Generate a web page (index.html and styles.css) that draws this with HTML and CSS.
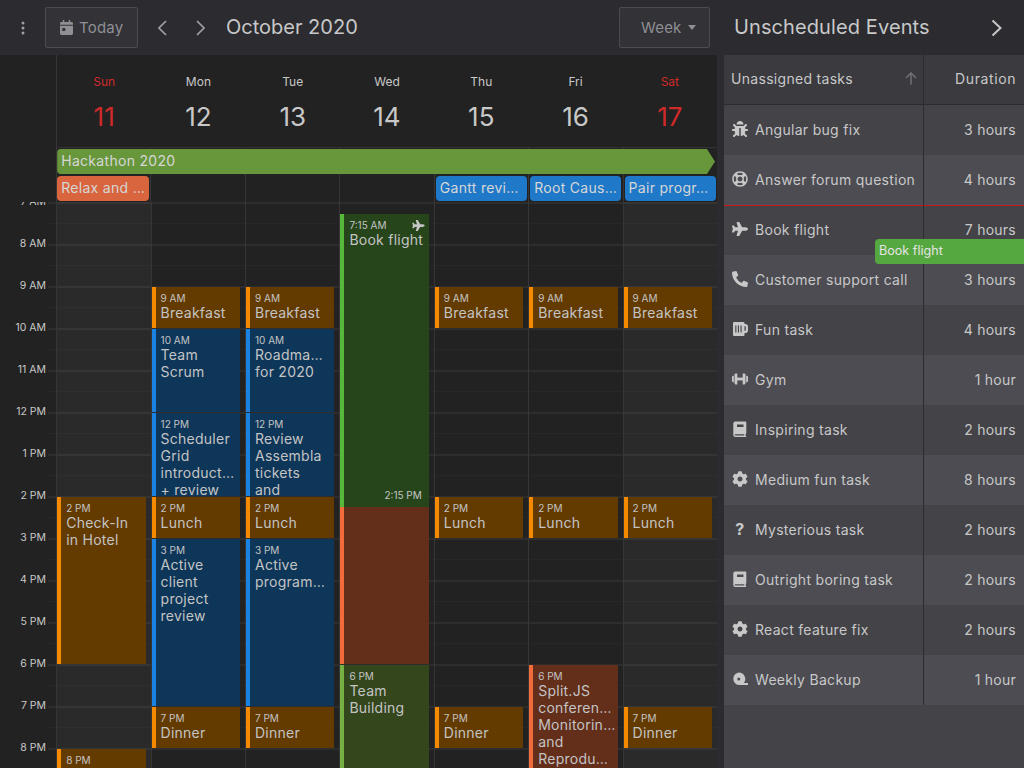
FILE: index.html
```html
<!DOCTYPE html>
<html lang="en">
<head>
    <meta charset="UTF-8">
    <title>Scheduler - October 2020</title>
    <link rel="stylesheet" href="styles.css">
</head>
<body>
    <svg class="sprite" aria-hidden="true">
        <symbol id="i-plane" viewBox="0 0 576 512"><path d="M480 192H365.71L260.61 8.06A16.014 16.014 0 0 0 246.71 0h-65.5c-10.63 0-18.3 10.17-15.38 20.39L214.86 192H112l-43.2-57.6c-3.02-4.03-7.77-6.4-12.8-6.4H16.01C5.6 128-2.04 137.78.49 147.88L32 256 .49 364.12C-2.04 374.22 5.6 384 16.01 384H56c5.04 0 9.78-2.37 12.8-6.4L112 320h102.86l-49.03 171.6c-2.92 10.22 4.75 20.4 15.38 20.4h65.5c5.74 0 11.04-3.08 13.89-8.06L365.71 320H480c35.35 0 96-28.65 96-64s-60.65-64-96-64z"/></symbol>
        <symbol id="i-phone" viewBox="0 0 512 512"><path d="M497.39 361.8l-112-48a24 24 0 0 0-28 6.9l-49.6 60.6A370.66 370.66 0 0 1 130.6 204.11l60.6-49.6a23.94 23.94 0 0 0 6.9-28l-48-112A24.16 24.16 0 0 0 122.6.61l-104 24A24 24 0 0 0 0 48c0 256.5 207.9 464 464 464a24 24 0 0 0 23.4-18.6l24-104a24.29 24.29 0 0 0-14.01-27.6z"/></symbol>
        <symbol id="i-cog" viewBox="0 0 512 512"><path d="M487.4 315.7l-42.6-24.6c4.3-23.2 4.3-47 0-70.2l42.6-24.6c4.9-2.8 7.1-8.6 5.5-14-11.1-35.6-30-67.8-54.7-94.6-3.8-4.1-10-5.1-14.8-2.3L380.8 110c-17.9-15.4-38.5-27.3-60.8-35.1V25.8c0-5.6-3.9-10.5-9.4-11.7-36.7-8.2-74.3-7.8-109.2 0-5.5 1.2-9.4 6.1-9.4 11.7V75c-22.2 7.9-42.8 19.8-60.8 35.1L88.7 85.5c-4.9-2.8-11-1.9-14.8 2.3-24.7 26.7-43.6 58.9-54.7 94.6-1.7 5.4.6 11.2 5.5 14L67.3 221c-4.3 23.2-4.3 47 0 70.2l-42.6 24.6c-4.9 2.8-7.1 8.6-5.5 14 11.1 35.6 30 67.8 54.7 94.6 3.8 4.1 10 5.1 14.8 2.3l42.6-24.6c17.9 15.4 38.5 27.3 60.8 35.1v49.2c0 5.6 3.9 10.5 9.4 11.7 36.7 8.2 74.3 7.8 109.2 0 5.5-1.2 9.4-6.1 9.4-11.7v-49.2c22.2-7.9 42.8-19.8 60.8-35.1l42.6 24.6c4.9 2.8 11 1.9 14.8-2.3 24.7-26.7 43.6-58.9 54.7-94.6 1.5-5.5-.7-11.3-5.6-14.1zM256 336c-44.1 0-80-35.9-80-80s35.9-80 80-80 80 35.9 80 80-35.9 80-80 80z"/></symbol>
        <symbol id="i-bug" viewBox="0 0 512 512"><path d="M511.988 288.9c-.478 17.43-15.217 31.1-32.653 31.1H424v16c0 21.864-4.882 42.584-13.6 61.145l60.228 60.228c12.496 12.497 12.496 32.758 0 45.255-12.498 12.497-32.759 12.496-45.256 0l-54.736-54.736C345.886 467.965 314.351 480 280 480V236c0-6.627-5.373-12-12-12h-24c-6.627 0-12 5.373-12 12v244c-34.351 0-65.886-12.035-90.636-32.108l-54.736 54.736c-12.498 12.497-32.759 12.496-45.256 0-12.496-12.497-12.496-32.758 0-45.255l60.228-60.228C92.882 378.584 88 357.864 88 336v-16H32.666C15.23 320 .491 306.33.013 288.9-.484 270.816 14.028 256 32 256h56v-58.745l-46.628-46.628c-12.496-12.497-12.496-32.758 0-45.255 12.498-12.497 32.758-12.497 45.256 0L141.255 160h229.489l54.627-54.627c12.498-12.497 32.758-12.497 45.256 0 12.496 12.497 12.496 32.758 0 45.255L424 197.255V256h56c17.972 0 32.484 14.816 31.988 32.9zM257 0c-61.856 0-112 50.144-112 112h224C369 50.144 318.856 0 257 0z"/></symbol>
        <symbol id="i-ring" viewBox="0 0 512 512"><path d="M256 504c136.967 0 248-111.033 248-248S392.967 8 256 8 8 119.033 8 256s111.033 248 248 248zm-103.398-76.72l53.411-53.411c31.806 13.506 68.128 13.522 99.974 0l53.411 53.411c-63.217 38.319-143.579 38.319-206.796 0zM336 256c0 44.112-35.888 80-80 80s-80-35.888-80-80 35.888-80 80-80 80 35.888 80 80zm91.28 103.398l-53.411-53.411c13.505-31.806 13.522-68.128 0-99.974l53.411-53.411c38.319 63.217 38.319 143.579 0 206.796zM359.397 84.72l-53.411 53.411c-31.806-13.505-68.128-13.522-99.973 0L152.602 84.72c63.217-38.319 143.579-38.319 206.795 0zM84.72 152.602l53.411 53.411c-13.506 31.806-13.522 68.128 0 99.974L84.72 359.398c-38.319-63.217-38.319-143.579 0-206.796z"/></symbol>
        <symbol id="i-mug" viewBox="0 0 16 16"><path fill-rule="evenodd" d="M2 1h9.500a1 1 0 0 1 1 1v1h.7A2.800 2.800 0 0 1 16 5.800v3.400a2.800 2.800 0 0 1-2.800 2.800h-.7v2a1 1 0 0 1-1 1H2a1 1 0 0 1-1-1V2a1 1 0 0 1 1-1zM12.500 5.300v4.400h.7a.6.600 0 0 0 .6-.6V5.900a.6.600 0 0 0-.6-.6zM3.300 4.500v7h1.100v-7zM5.900 4.500v7H7v-7zM8.500 4.500v7h1.100v-7z"/></symbol>
        <symbol id="i-gym" viewBox="0 0 16 16"><path d="M5 6.600h6v2.800H5z"/><path d="M3.600 2.600h1.700v10.800H3.600a1.100 1.100 0 0 1-1.100-1.100V3.700a1.100 1.100 0 0 1 1.100-1.100zM10.700 2.600h1.700a1.100 1.100 0 0 1 1.100 1.100v8.600a1.100 1.100 0 0 1-1.100 1.100h-1.700z"/><path d="M1.800 4.700v6.600A1.500 1.500 0 0 1 0 9.800V6.200a1.500 1.500 0 0 1 1.800-1.500zM14.200 4.700A1.500 1.500 0 0 1 16 6.200v3.600a1.500 1.500 0 0 1-1.800 1.500z"/></symbol>
        <symbol id="i-book" viewBox="0 0 16 16"><path fill-rule="evenodd" d="M3.300.5h10a1 1 0 0 1 1 1v10.600a1 1 0 0 1-.6.900v1.900a.8.800 0 0 1 .6.500.6.600 0 0 1-.6.600H3.300a2 2 0 0 1-2-2V2.500a2 2 0 0 1 2-2zM5 3.500v2.400h6.500V3.500zM3.400 13.200a.7.700 0 0 0 0 1.400h8.800v-1.400z"/></symbol>
        <symbol id="i-tape" viewBox="0 0 16 16"><path fill-rule="evenodd" d="M6.800 1.500a6.500 6.500 0 0 1 5 10.600H16v1.900H6.800a6.300 6.300 0 0 1 0-12.500zM6.800 6.500a1.500 1.500 0 1 0 0 3 1.500 1.500 0 0 0 0-3z"/></symbol>
        <symbol id="i-calendar" viewBox="0 0 14 16"><path fill-rule="evenodd" d="M3 0h1.600v2h4.800V0H11v2h1.500A1.500 1.500 0 0 1 14 3.500V5H0V3.500A1.500 1.500 0 0 1 1.500 2H3zM0 6.200h14v8.300a1.500 1.500 0 0 1-1.500 1.500h-11A1.500 1.500 0 0 1 0 14.500zM2.500 8.500v3.200h3.200V8.500z"/></symbol>
    </svg>

    <div class="app">
        <header class="topbar">
            <div class="toolbar">
                <button class="icon-btn">
                    <svg class="kebab" viewBox="0 0 4 14"><circle cx="2" cy="2" r="1.500"/><circle cx="2" cy="7" r="1.500"/><circle cx="2" cy="12" r="1.500"/></svg>
                </button>
                <button class="btn btn-today"><svg class="cal-icon"><use href="#i-calendar"/></svg>Today</button>
                <button class="icon-btn nav-first"><svg class="chev" viewBox="0 0 9 16"><path d="M8 1 1 8l7 7"/></svg></button>
                <button class="icon-btn nav-next"><svg class="chev" viewBox="0 0 9 16"><path d="m1 1 7 7-7 7"/></svg></button>
                <h1 class="month">October 2020</h1>
                <button class="btn btn-week">Week<span class="caret"></span></button>
            </div>
            <div class="side-title">
                <h2>Unscheduled Events</h2>
                <svg class="chev chev-big" viewBox="0 0 11 18"><path d="m1.500 1.500 8 7.500-8 7.500"/></svg>
            </div>
        </header>

        <div class="main">
            <section class="calendar">
                <div class="day-heads">
                    <div class="day-head weekend"><span class="day-name">Sun</span><span class="day-num">11</span></div>
                    <div class="day-head"><span class="day-name">Mon</span><span class="day-num">12</span></div>
                    <div class="day-head"><span class="day-name">Tue</span><span class="day-num">13</span></div>
                    <div class="day-head"><span class="day-name">Wed</span><span class="day-num">14</span></div>
                    <div class="day-head"><span class="day-name">Thu</span><span class="day-num">15</span></div>
                    <div class="day-head"><span class="day-name">Fri</span><span class="day-num">16</span></div>
                    <div class="day-head weekend"><span class="day-name">Sat</span><span class="day-num">17</span></div>
                </div>

                <div class="allday-row">
                    <div class="allday-grid">
                        <div class="allday hackathon">Hackathon 2020</div>
                        <div class="allday orange">Relax and …</div>
                        <div class="allday blue col-thu">Gantt revi…</div>
                        <div class="allday blue">Root Caus…</div>
                        <div class="allday blue">Pair progr…</div>
                    </div>
                </div>

                <div class="schedule">
                    <div class="axis">
                        <div class="hour">7 AM</div>
                        <div class="hour">8 AM</div>
                        <div class="hour">9 AM</div>
                        <div class="hour">10 AM</div>
                        <div class="hour">11 AM</div>
                        <div class="hour">12 PM</div>
                        <div class="hour">1 PM</div>
                        <div class="hour">2 PM</div>
                        <div class="hour">3 PM</div>
                        <div class="hour">4 PM</div>
                        <div class="hour">5 PM</div>
                        <div class="hour">6 PM</div>
                        <div class="hour">7 PM</div>
                        <div class="hour">8 PM</div>
                    </div>
                    <div class="days">
                        <div class="day weekend-col">
                            <div class="event amber" style="grid-row: 29 / 45"><span class="time">2 PM</span><span class="name">Check-In<br>in Hotel</span></div>
                            <div class="event amber" style="grid-row: 53 / 57"><span class="time">8 PM</span></div>
                        </div>
                        <div class="day">
                            <div class="event amber" style="grid-row: 9 / 13"><span class="time">9 AM</span><span class="name">Breakfast</span></div>
                            <div class="event navy" style="grid-row: 13 / 21"><span class="time">10 AM</span><span class="name">Team<br>Scrum</span></div>
                            <div class="event navy" style="grid-row: 21 / 29"><span class="time">12 PM</span><span class="name">Scheduler<br>Grid<br>introduct…<br>+ review</span></div>
                            <div class="event amber" style="grid-row: 29 / 33"><span class="time">2 PM</span><span class="name">Lunch</span></div>
                            <div class="event navy" style="grid-row: 33 / 49"><span class="time">3 PM</span><span class="name">Active<br>client<br>project<br>review</span></div>
                            <div class="event amber" style="grid-row: 49 / 53"><span class="time">7 PM</span><span class="name">Dinner</span></div>
                        </div>
                        <div class="day">
                            <div class="event amber" style="grid-row: 9 / 13"><span class="time">9 AM</span><span class="name">Breakfast</span></div>
                            <div class="event navy" style="grid-row: 13 / 21"><span class="time">10 AM</span><span class="name">Roadma…<br>for 2020</span></div>
                            <div class="event navy" style="grid-row: 21 / 29"><span class="time">12 PM</span><span class="name">Review<br>Assembla<br>tickets<br>and</span></div>
                            <div class="event amber" style="grid-row: 29 / 33"><span class="time">2 PM</span><span class="name">Lunch</span></div>
                            <div class="event navy" style="grid-row: 33 / 49"><span class="time">3 PM</span><span class="name">Active<br>program…</span></div>
                            <div class="event amber" style="grid-row: 49 / 53"><span class="time">7 PM</span><span class="name">Dinner</span></div>
                        </div>
                        <div class="day">
                            <div class="event rust" style="grid-row: 29 / 45"></div>
                            <div class="event forest" style="grid-row: 2 / 30">
                                <span class="time time-row">7:15 AM<svg class="plane"><use href="#i-plane"/></svg></span>
                                <span class="name">Book flight</span>
                                <span class="time end-time">2:15 PM</span>
                            </div>
                            <div class="event olive" style="grid-row: 45 / 57"><span class="time">6 PM</span><span class="name">Team<br>Building</span></div>
                        </div>
                        <div class="day">
                            <div class="event amber" style="grid-row: 9 / 13"><span class="time">9 AM</span><span class="name">Breakfast</span></div>
                            <div class="event amber" style="grid-row: 29 / 33"><span class="time">2 PM</span><span class="name">Lunch</span></div>
                            <div class="event amber" style="grid-row: 49 / 53"><span class="time">7 PM</span><span class="name">Dinner</span></div>
                        </div>
                        <div class="day">
                            <div class="event amber" style="grid-row: 9 / 13"><span class="time">9 AM</span><span class="name">Breakfast</span></div>
                            <div class="event amber" style="grid-row: 29 / 33"><span class="time">2 PM</span><span class="name">Lunch</span></div>
                            <div class="event rust" style="grid-row: 45 / 57"><span class="time">6 PM</span><span class="name">Split.JS<br>conferen…<br>Monitorin…<br>and<br>Reprodu…</span></div>
                        </div>
                        <div class="day weekend-col">
                            <div class="event amber" style="grid-row: 9 / 13"><span class="time">9 AM</span><span class="name">Breakfast</span></div>
                            <div class="event amber" style="grid-row: 29 / 33"><span class="time">2 PM</span><span class="name">Lunch</span></div>
                            <div class="event amber" style="grid-row: 49 / 53"><span class="time">7 PM</span><span class="name">Dinner</span></div>
                        </div>
                    </div>
                </div>
            </section>

            <aside class="side">
                <div class="task-head">
                    <div class="task-name">Unassigned tasks
                        <svg class="sort" viewBox="0 0 12 13"><path d="M6 12.500V1M1 6l5-5 5 5"/></svg>
                    </div>
                    <div class="task-dur">Duration</div>
                </div>
                <div class="task"><div class="task-name"><svg class="ico"><use href="#i-bug"/></svg>Angular bug fix</div><div class="task-dur">3 hours</div></div>
                <div class="task"><div class="task-name"><svg class="ico"><use href="#i-ring"/></svg>Answer forum question</div><div class="task-dur">4 hours</div></div>
                <div class="task drop-line"><div class="task-name"><svg class="ico"><use href="#i-plane"/></svg>Book flight</div><div class="task-dur">7 hours</div></div>
                <div class="task"><div class="task-name"><svg class="ico"><use href="#i-phone"/></svg>Customer support call</div><div class="task-dur">3 hours</div></div>
                <div class="task"><div class="task-name"><svg class="ico"><use href="#i-mug"/></svg>Fun task</div><div class="task-dur">4 hours</div></div>
                <div class="task"><div class="task-name"><svg class="ico"><use href="#i-gym"/></svg>Gym</div><div class="task-dur">1 hour</div></div>
                <div class="task"><div class="task-name"><svg class="ico"><use href="#i-book"/></svg>Inspiring task</div><div class="task-dur">2 hours</div></div>
                <div class="task"><div class="task-name"><svg class="ico"><use href="#i-cog"/></svg>Medium fun task</div><div class="task-dur">8 hours</div></div>
                <div class="task"><div class="task-name"><span class="ico ico-q">?</span>Mysterious task</div><div class="task-dur">2 hours</div></div>
                <div class="task"><div class="task-name"><svg class="ico"><use href="#i-book"/></svg>Outright boring task</div><div class="task-dur">2 hours</div></div>
                <div class="task"><div class="task-name"><svg class="ico"><use href="#i-cog"/></svg>React feature fix</div><div class="task-dur">2 hours</div></div>
                <div class="task"><div class="task-name"><svg class="ico"><use href="#i-tape"/></svg>Weekly Backup</div><div class="task-dur">1 hour</div></div>
                <div class="drag-proxy">Book flight</div>
            </aside>
        </div>
    </div>
</body>
</html>
```

FILE: styles.css
```css
* {
    box-sizing: border-box;
}
html, body {
    margin: 0;
    height: 100%;
    overflow: hidden;
}
body {
    background: #2b2b30;
    color: #c8c8c8;
    font-family: Inter, "Liberation Sans", sans-serif;
    font-size: 14px;
}
h1, h2 {
    margin: 0;
    font-weight: 400;
}
button {
    font: inherit;
    color: inherit;
    border: none;
    background: none;
    padding: 0;
}
.sprite {
    display: none;
}
.app {
    display: flex;
    flex-direction: column;
    height: 768px;
}

/* top bar */
.topbar {
    display: flex;
    height: 55px;
    flex: none;
    background: #2b2b30;
}
.toolbar {
    width: 724px;
    padding-right: 14px;
    display: flex;
    align-items: center;
}
.icon-btn {
    display: flex;
    align-items: center;
    justify-content: center;
    width: 38px;
    height: 41px;
    flex: none;
}
.icon-btn:first-child {
    width: 45px;
}
.kebab {
    width: 4px;
    height: 14px;
    fill: #a0a0a4;
}
.nav-first {
    margin-left: 5px;
}
.chev {
    width: 9px;
    height: 16px;
    fill: none;
    stroke: #a0a0a4;
    stroke-width: 1.7;
}
.chev-big {
    width: 11px;
    height: 18px;
    stroke: #c8c8c8;
    stroke-width: 2;
}
.btn {
    display: flex;
    align-items: center;
    height: 41px;
    background: #323237;
    border: 1px solid #4b4b50;
    border-radius: 2px;
    color: #8f8f94;
    font-size: 15px;
    letter-spacing: 0.2px;
}
.btn-today {
    width: 93px;
    padding-left: 14px;
}
.cal-icon {
    width: 13px;
    height: 15px;
    fill: #8f8f94;
    margin-right: 6px;
}
.month {
    margin-left: 7px;
    padding-bottom: 2px;
    font-size: 20px;
    flex: 1;
}
.btn-week {
    width: 91px;
    padding-left: 21px;
}
.caret {
    margin-left: 6px;
    border-left: 4.5px solid transparent;
    border-right: 4.5px solid transparent;
    border-top: 5px solid #8f8f94;
}
.side-title {
    width: 300px;
    padding: 0 22px 0 10px;
    display: flex;
    align-items: center;
    justify-content: space-between;
}
.side-title h2 {
    padding-bottom: 2px;
    font-size: 20px;
    letter-spacing: 0.1px;
}

/* calendar */
.main {
    flex: 1;
    display: flex;
    min-height: 0;
}
.calendar {
    width: 717px;
    flex: none;
    display: flex;
    flex-direction: column;
    background: #222;
    overflow: hidden;
}
.day-heads {
    height: 93px;
    flex: none;
    display: grid;
    grid-template-columns: repeat(7, 1fr);
    margin-left: 56px;
    border-left: 1px solid #363636;
    border-bottom: 1px solid #333;
}
.day-head {
    display: flex;
    flex-direction: column;
    align-items: center;
    padding-top: 19px;
}
.day-name {
    font-size: 12px;
    line-height: 15px;
}
.day-num {
    font-size: 26px;
    line-height: 32px;
    margin-top: 12px;
}
.weekend span {
    color: #cf2a2a;
}
.allday-row {
    height: 54px;
    flex: none;
    padding-left: 56.2px;
}
.allday-grid {
    height: 100%;
    display: grid;
    grid-template-columns: repeat(7, 1fr);
    grid-template-rows: 25px 25px;
    row-gap: 2px;
    align-content: start;
    padding-top: 1px;
    background: repeating-linear-gradient(90deg, #363636 0 1px, transparent 1px calc(100% / 7));
}
.allday {
    margin: 0 1.4px 0 2px;
    padding-left: 4px;
    border-radius: 4px;
    line-height: 24px;
    color: #d6d6d6;
    white-space: nowrap;
    overflow: hidden;
    letter-spacing: 0.3px;
}
.hackathon {
    grid-column: 1 / -1;
    margin: 0 2px 0 1px;
    background: rgba(106, 154, 60, 0.97);
    clip-path: polygon(0 0, calc(100% - 8px) 0, 100% 50%, calc(100% - 8px) 100%, 0 100%);
}
.orange {
    margin: 0 2px 0 1px;
    background: #d9653e;
}
.blue {
    background: #1f78c8;
}
.col-thu {
    grid-column-start: 5;
}
.schedule {
    flex: 1;
    display: flex;
    min-height: 0;
    overflow: hidden;
}
.axis {
    width: 56.2px;
    flex: none;
    margin-top: -21px;
    background: repeating-linear-gradient(180deg, #272727 0 1px, transparent 1px 21px, #2d2d2d 21px 23px, transparent 23px 42px) right top / 8px 100% no-repeat;
}
.hour {
    height: 42px;
    padding-right: 10.2px;
    text-align: right;
    font-size: 10.5px;
    line-height: 41px;
}
.days {
    flex: 1;
    display: grid;
    grid-template-columns: repeat(7, 1fr);
    background: repeating-linear-gradient(180deg, #2d2d2d 0 2px, transparent 2px 21px, #272727 21px 22px, transparent 22px 42px);
}
.day {
    display: grid;
    grid-template-rows: repeat(56, 10.5px);
    grid-auto-columns: 1fr;
    border-left: 1px solid #363636;
    min-width: 0;
}
.weekend-col {
    background: rgba(255, 255, 255, 0.04);
}
.event {
    grid-column: 1;
    display: flex;
    flex-direction: column;
    margin: 1px 5px 0 0;
    padding: 5px 4px 5px 5px;
    border-left: 4px solid;
    overflow: hidden;
    min-height: 0;
    white-space: nowrap;
    color: #c4c4c4;
}
.time {
    font-size: 10px;
    line-height: 13px;
    flex: none;
}
.name {
    margin-top: 0.4px;
    font-size: 14px;
    line-height: 16.8px;
    letter-spacing: 0.25px;
}
.time-row {
    display: flex;
    justify-content: space-between;
    align-items: center;
}
.time-row + .name {
    margin-top: 0;
}
.plane {
    width: 13px;
    height: 11px;
    fill: #c4c4c4;
}
.end-time {
    margin-top: auto;
    margin-right: 3px;
    text-align: right;
}
.amber {
    background: #633a00;
    border-color: #f58a00;
}
.navy {
    background: #0d3659;
    border-color: #1a82e0;
}
.forest {
    background: #26451a;
    border-color: #56b83a;
}
.olive {
    background: #33461c;
    border-color: #74b044;
}
.rust {
    background: #632e1a;
    border-color: #f26b3a;
}

/* unscheduled panel */
.side {
    position: relative;
    width: 300px;
    margin-left: 7px;
    flex: none;
    background: #434348;
    overflow: hidden;
}
.task-head, .task {
    display: flex;
    height: 50px;
    background: #434348;
}
.task-head {
    background: #3a3a3f;
    border-bottom: 1px solid #2b2b30;
}
.task:nth-child(odd) {
    background: #4c4c52;
}
.drop-line {
    box-shadow: inset 0 1px 0 #d01818;
}
.task-name {
    width: 200px;
    flex: none;
    display: flex;
    align-items: center;
    padding: 0 0 2px 8px;
    border-right: 1px solid #2b2b30;
    letter-spacing: 0.3px;
    white-space: nowrap;
}
.task-head .task-name {
    padding-left: 7px;
}
.task-dur {
    flex: 1;
    display: flex;
    align-items: center;
    justify-content: flex-end;
    padding: 0 8px 2px 0;
    letter-spacing: 0.25px;
}
.task-head .task-dur {
    letter-spacing: 0.6px;
}
.sort {
    width: 12px;
    height: 13px;
    margin-left: auto;
    margin-right: 6px;
    fill: none;
    stroke: #6e6e72;
    stroke-width: 1.6;
}
.ico {
    width: 16px;
    height: 16px;
    margin-right: 7px;
    flex: none;
    fill: #c8c8c8;
    color: #c8c8c8;
}
.ico-q {
    text-align: center;
    font-size: 16px;
    font-weight: 700;
    line-height: 16px;
}
.drag-proxy {
    position: absolute;
    top: 184px;
    left: 151px;
    right: 0;
    height: 25px;
    padding-left: 4px;
    background: #55a83f;
    border-radius: 4px 0 0 4px;
    color: #e4e4e4;
    font-size: 12.6px;
    line-height: 24px;
}
```
